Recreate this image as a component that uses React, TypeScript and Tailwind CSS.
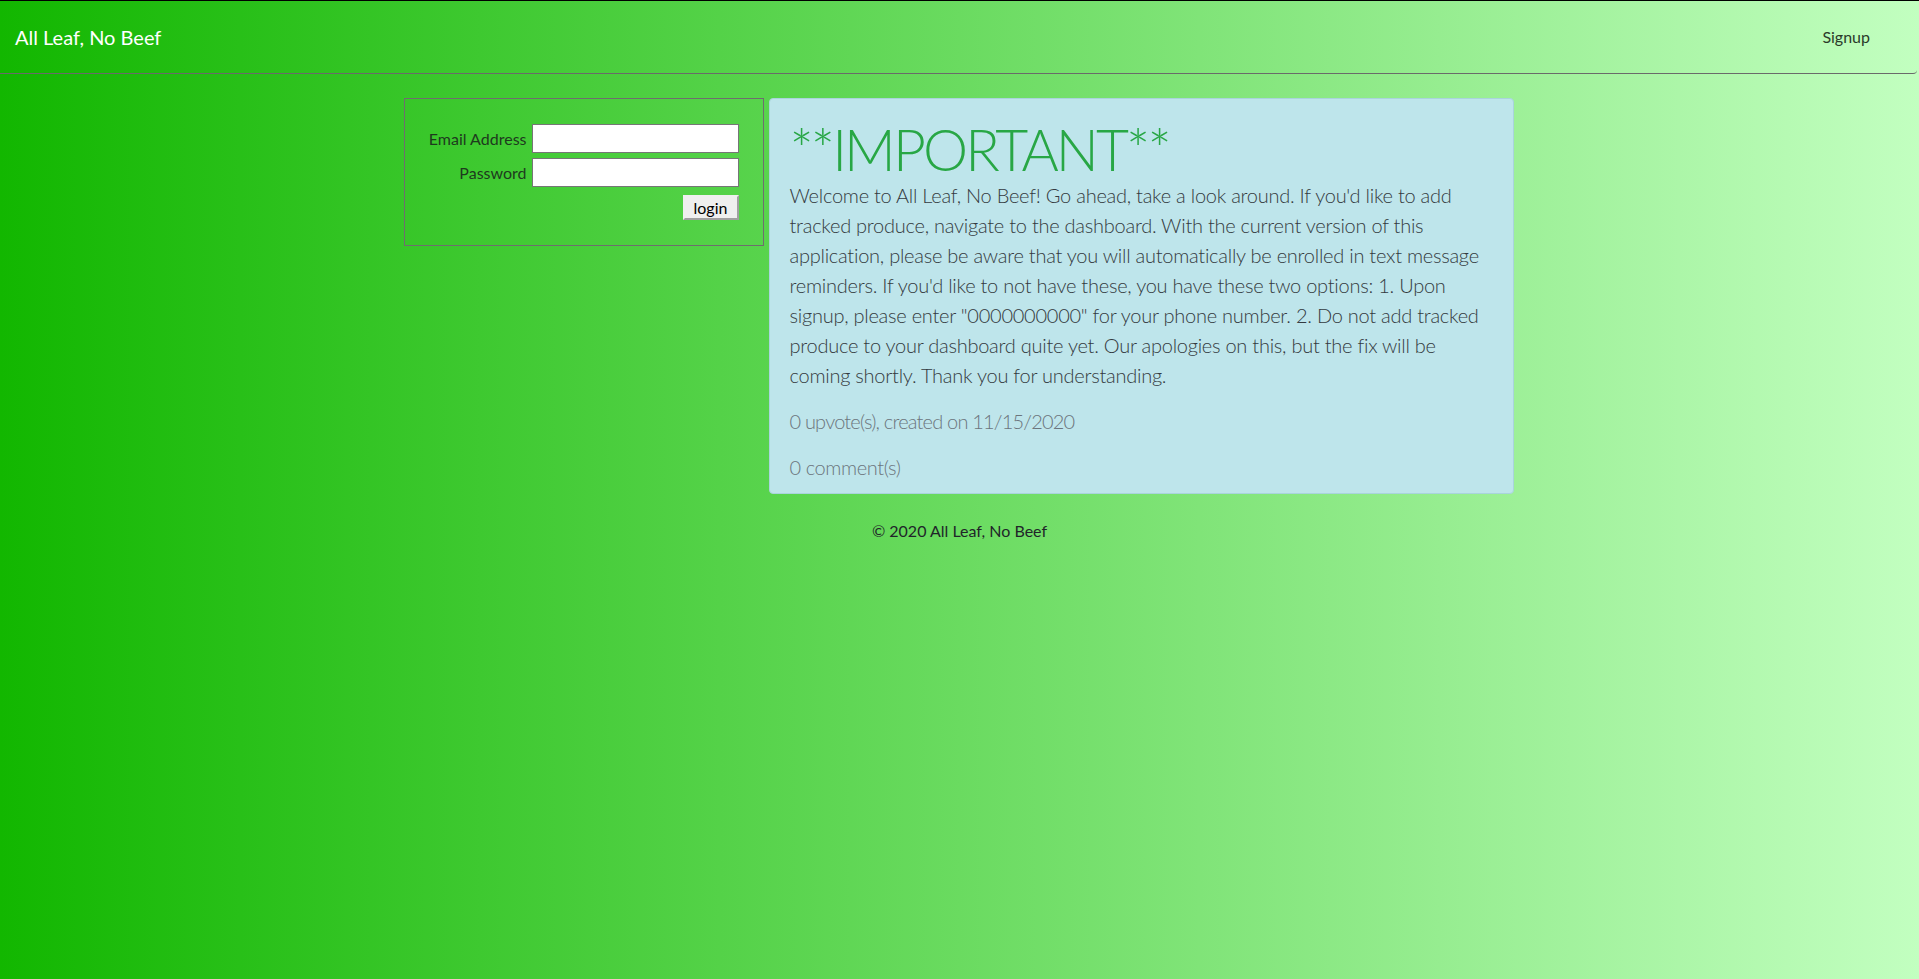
import React from "react";

const lines = [
  "Welcome to All Leaf, No Beef! Go ahead, take a look around. If you'd like to add",
  "tracked produce, navigate to the dashboard. With the current version of this",
  "application, please be aware that you will automatically be enrolled in text message",
  "reminders. If you'd like to not have these, you have these two options: 1. Upon",
  "signup, please enter \"0000000000\" for your phone number. 2. Do not add tracked",
  "produce to your dashboard quite yet. Our apologies on this, but the fix will be",
  "coming shortly. Thank you for understanding.",
];

export default function App() {
  return (
    <div
      className="min-h-[979px] w-full border-t border-black bg-[linear-gradient(to_right,#12b700,#c2ffc0)] text-[#212529]"
      style={{ fontFamily: "Lato, 'Open Sans', sans-serif" }}
    >
      <nav className="mr-[2px] flex h-[73px] items-center justify-between rounded-br-[4px] border-b border-[#6a6a6a] pl-[15px] pr-[47px]">
        <a className="text-[20px] leading-[30px] text-white">All Leaf, No Beef</a>
        <a className="text-[16px] leading-[24px] text-[#2a3a2a]">Signup</a>
      </nav>

      <div className="mt-[24px] flex justify-center gap-[5px] pr-[2px]">
        <div className="h-[148px] w-[360px] border border-[#6e6e6e] px-[24px] pt-[25px]">
          <div className="grid grid-cols-[auto_207px] items-center gap-x-[5px] gap-y-[5px]">
            <label className="text-right text-[16px] text-[#1e3a1e]">Email Address</label>
            <input className="h-[29px] border border-[#767676] bg-white" type="email" />
            <label className="text-right text-[16px] text-[#1e3a1e]">Password</label>
            <input className="h-[29px] border border-[#767676] bg-white" type="password" />
            <div />
            <div className="mt-[3px] flex justify-end">
              <button className="h-[25px] w-[56px] border-2 border-[#efefef] border-r-[#a0a0a0] border-b-[#a0a0a0] bg-[#efefef] text-[16px] leading-[18px] text-black">
                login
              </button>
            </div>
          </div>
        </div>

        <div className="w-[745px] rounded-[4px] border border-[#a9d4dc] bg-[#bee5eb] px-[20px] pt-[20px] pb-[11px] font-light">
          <h1 className="whitespace-nowrap text-[57px] leading-[61px] font-light tracking-[-2.9px] text-[#28a745]">**IMPORTANT**</h1>
          <p className="mb-[16px] whitespace-nowrap text-[20px] leading-[30px] tracking-[-0.25px] text-[#343a40]">
            {lines.map((l, i) => (
              <React.Fragment key={i}>
                {l}
                {i < lines.length - 1 && <br />}
              </React.Fragment>
            ))}
          </p>
          <p className="mb-[16px] text-[20px] leading-[30px] tracking-[-0.8px] text-[#6c757d]">0 upvote(s), created on 11/15/2020</p>
          <p className="text-[20px] leading-[30px] tracking-[-0.4px] text-[#6c757d]">0 comment(s)</p>
        </div>
      </div>

      <footer className="mt-[25px] text-center text-[16px] leading-[24px] text-[#212529]">© 2020 All Leaf, No Beef</footer>
    </div>
  );
}
